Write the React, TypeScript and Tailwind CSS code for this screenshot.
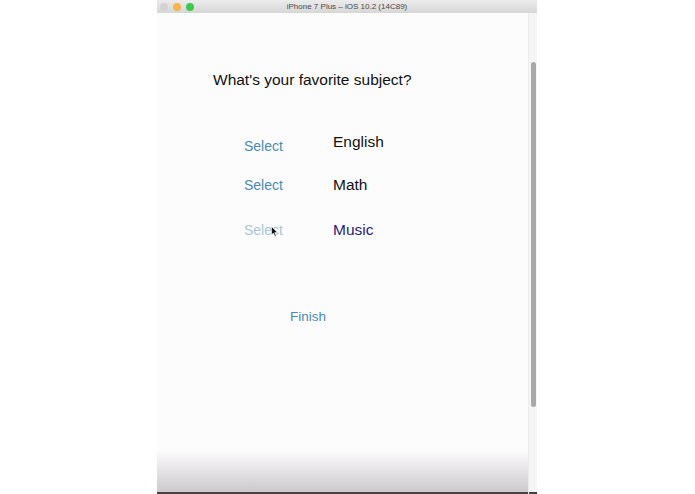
import React from "react";

export default function App() {
  const font = { fontFamily: '"Liberation Sans", Arial, sans-serif' };
  return (
    <div className="w-[695px] h-[494px] bg-white flex" style={font}>
      <div className="ml-[157px] w-[380px] h-[494px] flex flex-col">
        {/* title bar */}
        <div className="h-[13px] flex items-center bg-gradient-to-b from-[#ececec] to-[#d6d6d6] relative">
          <div className="flex items-center gap-[5px] pl-[3px]">
            <div className="w-[8px] h-[8px] rounded-full bg-[#d3d3d3]" />
            <div className="w-[8px] h-[8px] rounded-full bg-[#f6b44a]" />
            <div className="w-[8px] h-[8px] rounded-full bg-[#3cc84a]" />
          </div>
          <div className="absolute inset-0 flex items-center justify-center text-[8px] text-[#4a4a4a] leading-none">
            iPhone 7 Plus – iOS 10.2 (14C89)
          </div>
        </div>
        {/* screen */}
        <div className="flex-1 flex bg-[#fdfcfd]">
          <div className="flex-1 flex flex-col bg-gradient-to-b from-[#fdfcfd] from-[91%] to-[#cac7ca]">
            <div className="pl-[56px] mt-[57px] h-[20px] leading-[20px] text-[15.5px] text-[#111]">
              What's your favorite subject?
            </div>
            <div className="flex mt-[44px] h-[20px]">
              <div className="pl-[87px] w-[176px] pt-[4px] leading-[16px] text-[14px] text-[#4a8bb2]">Select</div>
              <div className="leading-[16px] text-[15.5px] text-[#111]">English</div>
            </div>
            <div className="flex mt-[21px] h-[20px] items-center">
              <div className="pl-[87px] w-[176px] leading-[16px] text-[14px] text-[#4a8bb2]">Select</div>
              <div className="leading-[16px] text-[15.5px] text-[#111]">Math</div>
            </div>
            <div className="flex mt-[25px] h-[20px] items-center">
              <div className="pl-[87px] w-[176px] leading-[16px] text-[14px] text-[#a8c6d8] relative">
                Select
                <svg className="absolute left-[114px] top-[4px]" width="7" height="11" viewBox="0 0 7 11">
                  <path d="M0.5 0.5 L0.5 9 L2.5 7 L4 10.5 L5.2 10 L3.8 6.6 L6.5 6.6 Z" fill="#111" stroke="#fff" strokeWidth="0.6" />
                </svg>
              </div>
              <div className="leading-[16px] text-[15.5px] text-[#2a1c7c]">Music</div>
            </div>
            <div className="mt-[67px] h-[20px] leading-[20px] pl-[133px] text-[13.5px] text-[#4a8bb2]">Finish</div>
            <div className="flex-1" />
            <div className="h-[2px] bg-[#4a4042]" />
          </div>
          {/* scrollbar */}
          <div className="w-[9px] flex flex-col bg-[#f6f5f6] border-l border-[#ececec]">
            <div className="h-[49px]" />
            <div className="mx-auto w-[5px] h-[345px] rounded-[3px] bg-[#a9a9a9]" />
            <div className="flex-1" />
            <div className="h-[2px] bg-[#4a4042]" />
          </div>
        </div>
      </div>
    </div>
  );
}
